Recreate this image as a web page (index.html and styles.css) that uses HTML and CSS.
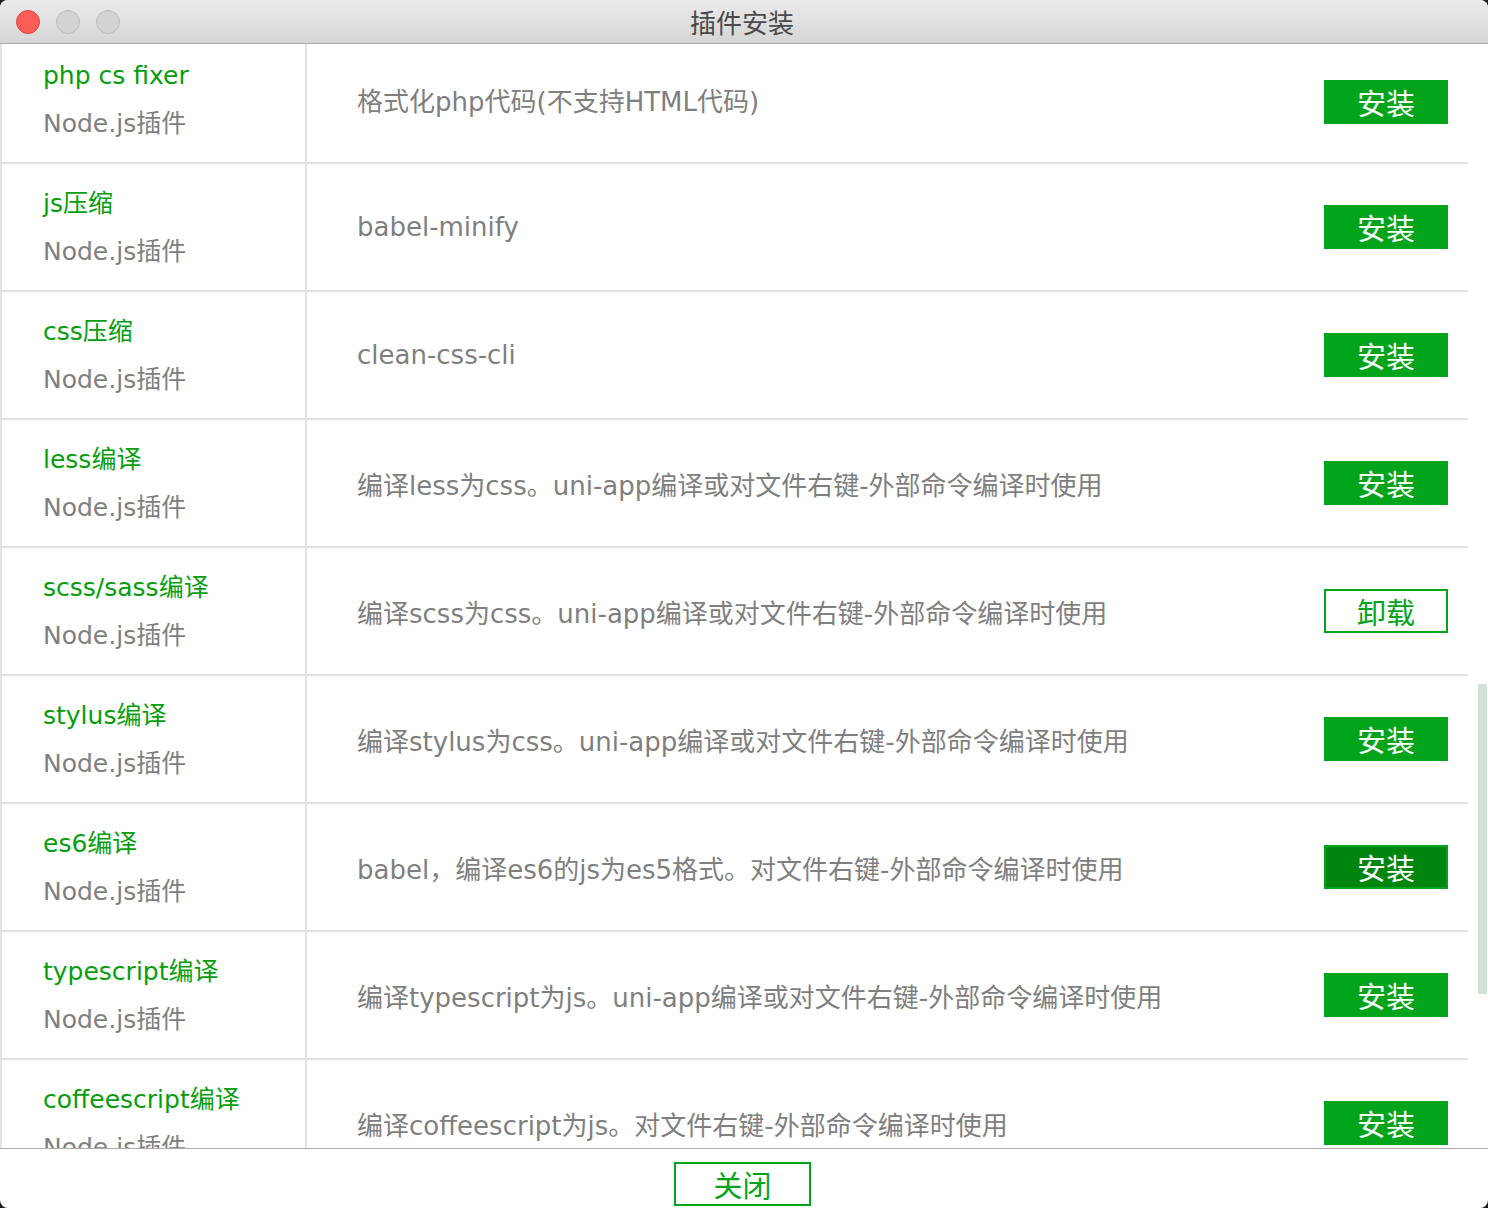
FILE: index.html
```html
<!DOCTYPE html>
<html lang="zh">
<head>
<meta charset="utf-8">
<title>插件安装</title>
<link rel="stylesheet" href="styles.css">
</head>
<body>
<div class="window">
  <header class="titlebar">
    <div class="lights">
      <span class="light red"></span>
      <span class="light gray"></span>
      <span class="light gray"></span>
    </div>
    <div class="title">插件安装</div>
  </header>
  <main class="listwrap">
    <div class="list">
      <div class="row">
        <div class="name"><div class="pname">php cs fixer</div><div class="ptype">Node.js插件</div></div>
        <div class="desc"><span>格式化php代码(不支持HTML代码)</span><button class="btn">安装</button></div>
      </div>
      <div class="row">
        <div class="name"><div class="pname">js压缩</div><div class="ptype">Node.js插件</div></div>
        <div class="desc"><span>babel-minify</span><button class="btn">安装</button></div>
      </div>
      <div class="row">
        <div class="name"><div class="pname">css压缩</div><div class="ptype">Node.js插件</div></div>
        <div class="desc"><span>clean-css-cli</span><button class="btn">安装</button></div>
      </div>
      <div class="row">
        <div class="name"><div class="pname">less编译</div><div class="ptype">Node.js插件</div></div>
        <div class="desc"><span>编译less为css。uni-app编译或对文件右键-外部命令编译时使用</span><button class="btn">安装</button></div>
      </div>
      <div class="row">
        <div class="name"><div class="pname">scss/sass编译</div><div class="ptype">Node.js插件</div></div>
        <div class="desc"><span>编译scss为css。uni-app编译或对文件右键-外部命令编译时使用</span><button class="btn outline">卸载</button></div>
      </div>
      <div class="row">
        <div class="name"><div class="pname">stylus编译</div><div class="ptype">Node.js插件</div></div>
        <div class="desc"><span>编译stylus为css。uni-app编译或对文件右键-外部命令编译时使用</span><button class="btn">安装</button></div>
      </div>
      <div class="row">
        <div class="name"><div class="pname">es6编译</div><div class="ptype">Node.js插件</div></div>
        <div class="desc"><span>babel，编译es6的js为es5格式。对文件右键-外部命令编译时使用</span><button class="btn hover">安装</button></div>
      </div>
      <div class="row">
        <div class="name"><div class="pname">typescript编译</div><div class="ptype">Node.js插件</div></div>
        <div class="desc"><span>编译typescript为js。uni-app编译或对文件右键-外部命令编译时使用</span><button class="btn">安装</button></div>
      </div>
      <div class="row">
        <div class="name"><div class="pname">coffeescript编译</div><div class="ptype">Node.js插件</div></div>
        <div class="desc"><span>编译coffeescript为js。对文件右键-外部命令编译时使用</span><button class="btn">安装</button></div>
      </div>
    </div>
    <div class="scrollthumb"></div>
  </main>
  <footer class="footer">
    <button class="btn outline close">关闭</button>
  </footer>
</div>
</body>
</html>
```
FILE: styles.css
```css
* { box-sizing: border-box; }
html, body { margin: 0; padding: 0; }
body {
  background: #1c1c1c;
  width: 1488px;
  height: 1208px;
  overflow: hidden;
  font-family: "DejaVu Sans", "Noto Sans CJK SC", sans-serif;
}
.window {
  width: 1488px;
  height: 1208px;
  background: #fff;
  border-radius: 8px;
  overflow: hidden;
  display: flex;
  flex-direction: column;
}
.titlebar {
  height: 44px;
  flex: none;
  background: linear-gradient(#ebebeb, #d5d5d5);
  border-bottom: 1px solid #ababab;
  display: flex;
  align-items: center;
  position: relative;
}
.lights {
  display: flex;
  gap: 16px;
  padding-left: 16px;
  position: absolute;
  left: 0;
  top: 10px;
}
.light {
  width: 24px;
  height: 24px;
  border-radius: 50%;
  display: block;
}
.light.red { background: #fc5e57; border: 1px solid #e0443e; }
.light.gray { background: #d3d3d3; border: 1px solid #bcbcbc; }
.title {
  flex: 1;
  text-align: center;
  font-family: "Noto Sans CJK SC", sans-serif;
  font-size: 26px;
  color: #4a4a4a;
  line-height: 44px;
  padding-right: 4px;
}
.listwrap {
  flex: 1;
  overflow: hidden;
  position: relative;
}
.list {
  margin-top: -8px;
  width: 1468px;
}
.row {
  height: 128px;
  display: flex;
  border-bottom: 2px solid #e1e1e1;
}
.name {
  width: 307px;
  flex: none;
  border-left: 2px solid #e4e4e4;
  border-right: 2px solid #e1e1e1;
  padding: 16px 0 0 41px;
  font-size: 25px;
}
.pname { line-height: 48px; color: #059e0c; white-space: nowrap; }
.ptype { line-height: 48px; color: #7f7f7f; white-space: nowrap; }
.desc {
  flex: 1;
  display: flex;
  align-items: center;
  justify-content: space-between;
  padding: 0 20px 0 50px;
  font-size: 26px;
  color: #7f7f7f;
}
.row:first-child .btn { margin-top: 5px; }
.btn {
  width: 124px;
  height: 44px;
  border: 2px solid #02a41c;
  background: #02a41c;
  color: #fff;
  font-family: "Noto Sans CJK SC", sans-serif;
  font-size: 29px;
  line-height: 38px;
  padding: 0;
  margin: 0;
  flex: none;
  cursor: pointer;
}
.btn.hover { background: #00860f; }
.btn.outline { background: #fff; color: #02a41c; }
.scrollthumb {
  position: absolute;
  right: 1px;
  top: 640px;
  width: 9px;
  height: 310px;
  background: #d2e3d6;
}
.footer {
  height: 60px;
  flex: none;
  border-top: 1px solid #ababab;
  display: flex;
  justify-content: center;
  padding-top: 13px;
}
.btn.close { width: 137px; height: 44px; margin-left: -3px; }
```
